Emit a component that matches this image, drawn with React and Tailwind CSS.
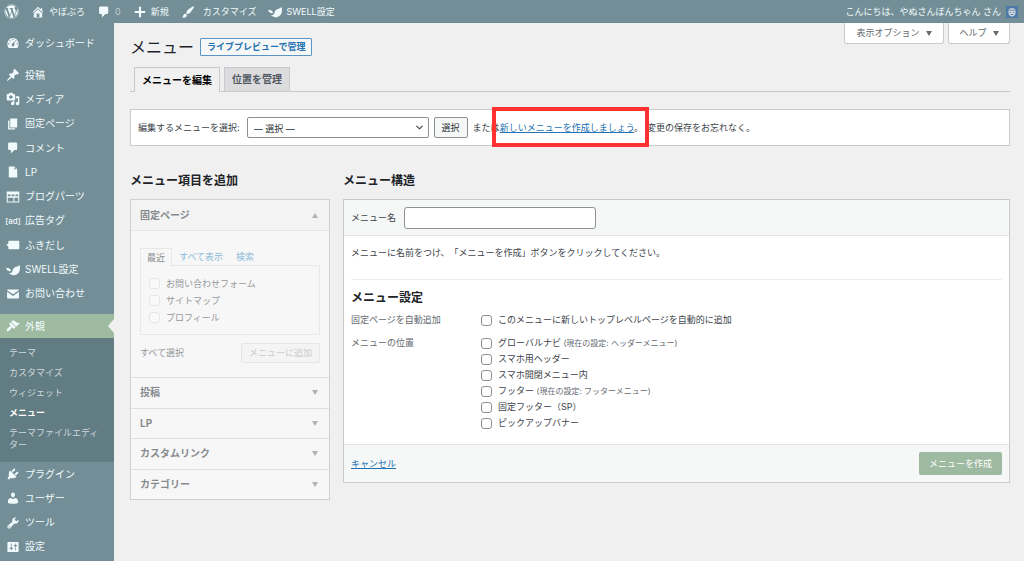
import { ChevronDown } from 'lucide-react';
import { FaWordpress } from 'react-icons/fa';

const paths = {
  home: 'M16 8.5l1.53 1.53-1.06 1.06L10 4.6l-6.47 6.49-1.06-1.06L10 2.5l4 4v-2h2v4zm-6-2.46l6 5.99V18H4v-5.97zM12 17v-5H8v5h4z',
  comment: 'M5 2h9c1.1 0 2 .9 2 2v7c0 1.1-.9 2-2 2h-2l-5 5v-5H5c-1.1 0-2-.9-2-2V4c0-1.1.9-2 2-2z',
  plus: 'M17.5 8.5v3h-6v6h-3v-6h-6v-3h6v-6h3v6h6z',
  brush: 'M18.33 3.57s.27-.8-.31-1.36c-.53-.52-1.22-.24-1.22-.24-.61.3-5.76 3.47-7.67 5.57-.86.96-2.06 3.79-1.09 4.82.92.98 3.96-.17 4.79-1 2.06-2.06 5.21-7.17 5.5-7.79zM1.4 17.65c2.37-1.56 1.46-3.41 3.23-4.64.93-.65 2.22-.62 3.08.29.63.67.8 2.57-.16 3.46-1.57 1.45-4 1.55-6.15.89z',
  swell: 'M19.5 3c1 4 .6 8.500-2 11.500-3.200 3.600-9.500 4-13.500.3 2.500 0 4.200-1 5-2.800.4-4 3.500-6.500 5.700-6.700 2-.2 3.800-1 4.800-2.300zM0 6.500c1.500 1.200 4 .6 5.500 1.600 1.200.8 1.700 2.200 1.200 3.700C3.500 12.300.5 10.200 0 6.500z',
  dashboard: 'M3.76 17h12.48c1.09-1.45 1.76-3.24 1.76-5.2C18 6.94 14.42 3 10 3S2 6.94 2 11.8c0 1.96.67 3.75 1.76 5.2zM10 4c.55 0 1 .45 1 1s-.45 1-1 1-1-.45-1-1 .45-1 1-1zM6 6c.55 0 1 .45 1 1s-.45 1-1 1-1-.45-1-1 .45-1 1-1zm8 0c.55 0 1 .45 1 1s-.45 1-1 1-1-.45-1-1 .45-1 1-1zm-5.37 5.55L12 7v6c0 1.1-.9 2-2 2s-2-.9-2-2c0-.57.24-1.08.63-1.45zM4 10c.55 0 1 .45 1 1s-.45 1-1 1-1-.45-1-1 .45-1 1-1zm12 0c.55 0 1 .45 1 1s-.45 1-1 1-1-.45-1-1 .45-1 1-1z',
  post: 'M10.44 3.02l1.82-1.82 6.36 6.35-1.83 1.82c-1.05-.68-2.48-.57-3.41.36l-.75.75c-.92.93-1.04 2.35-.35 3.41l-1.83 1.82-2.41-2.41-2.8 2.79c-.42.42-3.38 2.71-3.8 2.29s1.86-3.39 2.28-3.81l2.79-2.79L4.1 9.36l1.83-1.82c1.05.69 2.48.57 3.4-.36l.75-.75c.93-.92 1.05-2.35.36-3.41z',
  media: 'M13 11V4c0-.55-.45-1-1-1h-1.67L9 1H5L3.67 3H2c-.55 0-1 .45-1 1v7c0 .55.45 1 1 1h10c.55 0 1-.45 1-1zM7 4.5c1.38 0 2.5 1.12 2.5 2.5S8.38 9.5 7 9.5 4.5 8.38 4.5 7 5.62 4.5 7 4.5zM14 6h5v10.5c0 1.38-1.12 2.5-2.5 2.5S14 17.88 14 16.5s1.12-2.5 2.5-2.5c.17 0 .34.02.5.05V9h-3V6zm-4 8.05V13h2v3.5c0 1.38-1.12 2.5-2.5 2.5S7 17.88 7 16.5 8.12 14 9.5 14c.17 0 .34.02.5.05z',
  page: 'M6 15V2h10v13H6zm-1 1h8v2H3V5h2v11z',
  file: 'M12 2l4 4v12H4V2h8zm0 4h3l-3-3v3z',
  parts: 'M1 2h18v16H1V2zm1.500 4.500v2.500h4V6.500h-4zm5.500 0v2.500h4V6.500H8zm5.500 0v2.500h4V6.500h-4zM2.500 11v5.500h8V11h-8zM12 11v5.500h5.500V11H12z',
  balloon: 'M5 4h12.500c1 0 1.500.6 1.500 1.500v9c0 1-.5 1.500-1.500 1.500H5c-1 0-1.700-.6-1.700-1.500v-2.500L.5 9.500l2.800-1.500V5.500C3.300 4.600 4 4 5 4z',
  mail: 'M2.500 3.500h15c.6 0 1 .4 1 1l-8.500 6-8.500-6c0-.6.4-1 1-1zm-1 3.300l8.500 6 8.500-6v8.700c0 .6-.4 1-1 1h-15c-.6 0-1-.4-1-1V6.800z',
  appearance: 'M14.48 11.06L7.41 3.99l1.5-1.5c.5-.56 2.3-.47 3.51.32 1.21.8 1.43 1.28 2.91 2.1 1.18.64 2.45 1.26 4.45.85zm-.71.71L6.7 4.7 4.93 6.47c-.39.39-.39 1.02 0 1.41l1.06 1.06c.39.39.39 1.03 0 1.42-.6.6-1.43 1.11-2.21 1.69-.35.26-.7.53-1.01.84C1.43 14.23.4 16.08 1.4 17.07c.99 1 2.84-.03 4.18-1.36.31-.31.58-.66.85-1.02.57-.78 1.08-1.61 1.69-2.21.39-.39 1.02-.39 1.41 0l1.06 1.06c.39.39 1.02.39 1.41 0z',
  plugins: 'M13.11 4.36L9.87 7.6 8 5.73l3.24-3.24c.35-.34 1.05-.2 1.56.32.52.51.66 1.21.31 1.55zm-8 1.77l.91-1.12 9.01 9.01-1.19.84c-.71.71-2.63 1.16-3.82 1.16H6.14L4.9 17.26c-.59.59-1.54.59-2.12 0-.59-.58-.59-1.53 0-2.12l1.24-1.24v-3.88c0-1.13.4-3.19 1.09-3.89zm7.26 3.97l3.24-3.24c.34-.35 1.04-.21 1.55.31.52.51.66 1.21.31 1.55l-3.24 3.25z',
  users: 'M10 9.25c-2.27 0-2.73-3.44-2.73-3.44C7 4.02 7.82 2 9.97 2c2.16 0 2.98 2.02 2.71 3.81 0 0-.41 3.44-2.68 3.44zm0 2.57L12.72 10c2.39 0 4.52 2.33 4.52 4.53v2.49s-3.65 1.13-7.24 1.13c-3.65 0-7.24-1.13-7.24-1.13v-2.49c0-2.25 1.94-4.48 4.47-4.48z',
  tools: 'M16.68 9.77c-1.34 1.34-3.3 1.67-4.95.99l-5.41 6.52c-.99.99-2.59.99-3.58 0s-.99-2.59 0-3.57l6.52-5.42c-.68-1.65-.35-3.61.99-4.95 1.28-1.28 3.12-1.62 4.72-1.06l-2.89 2.89 2.82 2.82 2.86-2.87c.53 1.58.18 3.39-1.08 4.65zM3.81 16.21c.4.39 1.04.39 1.43 0 .4-.4.4-1.04 0-1.43-.39-.4-1.03-.4-1.43 0-.39.39-.39 1.03 0 1.43z',
  settings: 'M18 16V4c0-.55-.45-1-1-1H3c-.55 0-1 .45-1 1v12c0 .55.45 1 1 1h14c.55 0 1-.45 1-1zM8 11h1c.55 0 1 .45 1 1s-.45 1-1 1H8v1.5c0 .28-.22.5-.5.5s-.5-.22-.5-.5V13H6c-.55 0-1-.45-1-1s.45-1 1-1h1V5.5c0-.28.22-.5.5-.5s.5.22.5.5V11zm5-2h-1c-.55 0-1-.45-1-1s.45-1 1-1h1V5.5c0-.28.22-.5.5-.5s.5.22.5.5V7h1c.55 0 1 .45 1 1s-.45 1-1 1h-1v5.5c0 .28-.22.5-.5.5s-.5-.22-.5-.5V9z',
};

const mainItems = [
  { icon: 'post', label: '投稿' },
  { icon: 'media', label: 'メディア' },
  { icon: 'page', label: '固定ページ' },
  { icon: 'comment', label: 'コメント' },
  { icon: 'file', label: 'LP' },
  { icon: 'parts', label: 'ブログパーツ' },
  { icon: 'ad', label: '広告タグ' },
  { icon: 'balloon', label: 'ふきだし' },
  { icon: 'swell', label: 'SWELL設定' },
  { icon: 'mail', label: 'お問い合わせ' },
];

const bottomItems = [
  { icon: 'plugins', label: 'プラグイン' },
  { icon: 'users', label: 'ユーザー' },
  { icon: 'tools', label: 'ツール' },
  { icon: 'settings', label: '設定' },
];

const submenu = ['テーマ', 'カスタマイズ', 'ウィジェット', 'メニュー', 'テーマファイルエディター'];

const pages = ['お問い合わせフォーム', 'サイトマップ', 'プロフィール'];

const closedSections = ['投稿', 'LP', 'カスタムリンク', 'カテゴリー'];

const locations = [
  { label: 'グローバルナビ', note: '(現在の設定: ヘッダーメニュー)' },
  { label: 'スマホ用ヘッダー' },
  { label: 'スマホ開閉メニュー内' },
  { label: 'フッター', note: '(現在の設定: フッターメニュー)' },
  { label: '固定フッター（SP）' },
  { label: 'ピックアップバナー' },
];

function Icon({ name, className = 'size-[14px]' }) {
  return (
    <svg viewBox="0 0 20 20" fill="currentColor" fillRule="evenodd" className={`shrink-0 ${className}`} aria-hidden="true">
      <path d={paths[name]} />
    </svg>
  );
}

// 小さな三角マーク
function Caret({ up = false, className = '' }) {
  return (
    <svg viewBox="0 0 6 5" fill="currentColor" className={`h-[5px] w-[6px] shrink-0 ${className}`} aria-hidden="true">
      <path d={up ? 'M3 0l3 5H0z' : 'M0 0h6L3 5z'} />
    </svg>
  );
}

function BarItem({ icon, children, className = 'gap-1' }) {
  return (
    <a href="#" className={`flex items-center ${className}`}>
      <Icon name={icon} />
      <span>{children}</span>
    </a>
  );
}

function NavItem({ icon, label }) {
  return (
    <a href="#" className="flex items-center gap-[5px] pl-[6px] text-[10px] text-[#f1fafc]">
      {icon === 'ad' ? (
        <span className="flex w-[14px] justify-center text-[8px] font-medium whitespace-nowrap">[ad]</span>
      ) : (
        <Icon name={icon} />
      )}
      <span className="whitespace-nowrap">{label}</span>
    </a>
  );
}

function Sidebar() {
  return (
    <nav className="w-[114px] shrink-0 bg-[#738e96] pt-2">
      <div className="grid h-6">
        <NavItem icon="dashboard" label="ダッシュボード" />
      </div>
      <div className="mt-2 grid h-[243px] auto-rows-fr">
        {mainItems.map((item) => (
          <NavItem key={item.label} {...item} />
        ))}
      </div>

      {/* 外観（現在のメニュー） */}
      <div className="relative mt-2 grid h-6 bg-[#9ebaa0]">
        <NavItem icon="appearance" label="外観" />
        <svg viewBox="0 0 6 14" className="absolute top-[5px] right-0 h-[14px] w-[6px] fill-[#f0f0f1]" aria-hidden="true">
          <path d="M6 0v14L0 7z" />
        </svg>
      </div>
      <ul className="bg-[#627c83] pt-[5px] pr-2 pb-[7px] pl-[9px] text-[9px] leading-[12px] text-[#ced9dc]">
        {submenu.map((label) => (
          <li key={label} className="py-1">
            <a href="#" className={label === 'メニュー' ? 'font-bold text-white' : ''}>
              {label}
            </a>
          </li>
        ))}
      </ul>

      <div className="grid h-[97px] auto-rows-fr">
        {bottomItems.map((item) => (
          <NavItem key={item.label} {...item} />
        ))}
      </div>
    </nav>
  );
}

function CheckRow({ label, note }) {
  return (
    <label className="flex h-4 items-center gap-[6px] text-[#3c434a]">
      <input type="checkbox" className="size-[11px] shrink-0 appearance-none rounded-[3px] border border-[#8c8f94] bg-white" />
      <span>
        {label} {note && <span className="text-[8px] text-[#646970]">{note}</span>}
      </span>
    </label>
  );
}

function AddItems() {
  return (
    <section className="w-[200px] shrink-0">
      <h2 className="mb-[10px] text-[12px] leading-4 font-bold text-[#1d2327]">メニュー項目を追加</h2>
      <div className="border border-[#d0d1d3] bg-[#f7f7f7] text-[#96999c]">
        <button type="button" className="flex h-[31px] w-full items-center justify-between border-b border-[#e6e6e7] bg-[#f3f3f3] pr-[11px] pl-[9px] text-[10px] font-bold text-[#888b8e]">
          固定ページ
          <Caret up className="text-[#b0b2b4]" />
        </button>

        <div className="px-[9px] pt-[17px] pb-[14px]">
          <div className="flex h-[17px] items-center gap-px text-[#8dbbd9]">
            <a href="#" className="z-10 -mb-px flex h-[18px] items-center border border-b-0 border-[#e8e8e9] bg-[#f7f7f7] px-[6px] text-[#888b8e]">最近</a>
            <a href="#" className="px-[6px]">すべて表示</a>
            <a href="#" className="px-[6px]">検索</a>
          </div>
          <div className="border border-[#e8e8e9] px-[8px] pt-[9px] pb-[8px]">
            {pages.map((page) => (
              <label key={page} className="flex h-[17px] items-center gap-[6px]">
                <input type="checkbox" disabled className="size-[11px] appearance-none rounded-[3px] border border-[#e6e6e7] bg-[#f9f9f9]" />
                {page}
              </label>
            ))}
          </div>
          <div className="mt-2 flex h-5 items-center justify-between">
            <a href="#">すべて選択</a>
            <button type="button" disabled className="h-5 rounded-[2px] border border-[#e6e6e7] bg-[#f4f4f4] px-[7px] text-[#c9cbcd]">メニューに追加</button>
          </div>
        </div>

        <div className="grid h-[122px] auto-rows-fr">
          {closedSections.map((title) => (
            <button key={title} type="button" className="flex items-center justify-between border-t border-[#e0e0e1] pr-[11px] pl-[9px] text-[10px] font-bold text-[#888b8e]">
              {title}
              <Caret className="text-[#b0b2b4]" />
            </button>
          ))}
        </div>
      </div>
    </section>
  );
}

function MenuStructure() {
  return (
    <section className="min-w-0 flex-1">
      <h2 className="mb-[10px] text-[12px] leading-4 font-bold text-[#1d2327]">メニュー構造</h2>
      <form className="border border-[#c9cacd] bg-white">
        <div className="flex h-9 items-center gap-2 border-b border-[#e2e3e5] bg-[#f6f7f7] px-[7px]">
          <label htmlFor="menu-name">メニュー名</label>
          <input id="menu-name" type="text" className="h-[22px] w-[192px] rounded-[3px] border border-[#8c8f94] bg-white px-2" />
        </div>

        <div className="px-[7px] pt-[9px] pb-[13px]">
          <p className="leading-4">メニューに名前をつけ、「メニューを作成」ボタンをクリックしてください。</p>
          <hr className="mt-[18px] border-[#eeeeef]" />
          <h3 className="mt-[10px] text-[12px] leading-4 font-bold text-[#1d2327]">メニュー設定</h3>
          <fieldset className="mt-[6px] flex">
            <legend className="float-left w-[130px] leading-4 text-[#646970]">固定ページを自動追加</legend>
            <CheckRow label="このメニューに新しいトップレベルページを自動的に追加" />
          </fieldset>
          <fieldset className="mt-[7px] flex">
            <legend className="float-left w-[130px] leading-4 text-[#646970]">メニューの位置</legend>
            <div>
              {locations.map((item) => (
                <CheckRow key={item.label} {...item} />
              ))}
            </div>
          </fieldset>
        </div>

        <div className="flex h-[38px] items-center justify-between border-t border-[#e2e3e5] bg-[#f6f7f7] px-[7px]">
          <a href="#" className="text-[#2271b1] underline">キャンセル</a>
          <button type="submit" className="h-[23px] rounded-[2px] bg-[#9ebaa0] px-[10px] text-white">メニューを作成</button>
        </div>
      </form>
    </section>
  );
}

export default function App() {
  return (
    <div className="flex min-h-screen flex-col bg-[#f0f0f1] font-['Inter','Noto_Sans_CJK_JP',sans-serif] text-[9px] text-[#3c434a] [text-spacing-trim:space-all]">
      {/* 管理バー */}
      <header className="flex h-[23px] items-center justify-between bg-[#738e96] pr-[6px] pl-1 text-[#f1fafc]">
        <div className="flex items-center gap-3">
          <a href="#" aria-label="WordPress">
            <FaWordpress className="size-[15px]" />
          </a>
          <BarItem icon="home">やぼぶろ</BarItem>
          <BarItem icon="comment"><span className="text-[#c3d0d4]">0</span></BarItem>
          <BarItem icon="plus">新規</BarItem>
          <BarItem icon="brush" className="gap-2">カスタマイズ</BarItem>
          <BarItem icon="swell">SWELL設定</BarItem>
        </div>
        <a href="#" className="flex items-center gap-[5px]">
          こんにちは、やぬさんぼんちゃん さん
          <svg viewBox="0 0 12 12" className="size-3" aria-hidden="true">
            <rect width="12" height="12" fill="#4f7aa6" />
            <path d="M2.500 4C2.500 1.500 9.500 1.500 9.500 4v3c0 4.500-7 4.500-7 0z" fill="#c6d4e0" />
            <path d="M2.500 4.200h7M4 6.500h1M7 6.500h1M4.500 8.500h3" stroke="#4f6f92" strokeWidth="0.7" />
          </svg>
        </a>
      </header>

      <div className="flex flex-1">
        <Sidebar />

        <main className="min-w-0 flex-1 pr-[14px] pl-4">
          {/* タイトルと表示オプション */}
          <div className="flex items-start justify-between">
            <div className="flex items-center gap-[6px] pt-[15px]">
              <h1 className="text-[16px] leading-[18px] text-[#1d2327]">メニュー</h1>
              <a href="#" className="flex h-[18px] items-center rounded-[1px] border border-[#5b95c5] bg-[#f6f7f7] px-[6px] font-bold text-[#2271b1]">
                ライブプレビューで管理
              </a>
            </div>
            <div className="flex gap-1">
              <button type="button" className="flex h-[21px] w-[100px] items-center justify-center gap-[6px] rounded-b-[3px] border border-t-0 border-[#c9cacd] bg-white text-[#646970]">
                表示オプション <Caret />
              </button>
              <button type="button" className="flex h-[21px] w-[62px] items-center justify-center gap-[6px] rounded-b-[3px] border border-t-0 border-[#c9cacd] bg-white text-[#646970]">
                ヘルプ <Caret />
              </button>
            </div>
          </div>

          {/* タブ */}
          <div className="mt-[11px] flex h-[25px] gap-1 border-b border-[#c9cacd] pl-1 text-[10px] font-bold">
            <a href="#" className="-mb-px flex items-center border border-b-0 border-[#c9cacd] bg-[#f0f0f1] px-[7px] text-black">メニューを編集</a>
            <a href="#" className="flex items-center border border-b-0 border-[#c9cacd] bg-[#dcdcde] px-[7px] text-[#50575e]">位置を管理</a>
          </div>

          {/* メニュー選択 */}
          <form className="mt-[17px] flex items-center border border-[#c9cacd] bg-white p-[7px] leading-[21px]">
            <label htmlFor="select-menu">編集するメニューを選択:</label>
            <div className="relative ml-[7px]">
              <select id="select-menu" className="block h-[21px] w-[182px] appearance-none rounded-[2px] border border-[#8c8f94] bg-white px-[6px] text-[#2c3338]">
                <option>— 選択 —</option>
              </select>
              <ChevronDown className="pointer-events-none absolute top-[5px] right-[4px] size-[11px] text-[#50575e]" strokeWidth={3} />
            </div>
            <button type="button" className="ml-[5px] h-[21px] rounded-[2px] border border-[#8c8f94] bg-[#f6f7f7] px-[7px] leading-[19px] text-[#2c3338]">選択</button>
            <p className="ml-[5px] flex">
              または
              <span className="relative">
                <a href="#" className="text-[#2271b1] underline">新しいメニューを作成しましょう</a>。
                <span className="pointer-events-none absolute -top-[10px] -right-[6px] -bottom-[9px] -left-[8px] border-4 border-[#ff3131]" />
              </span>
              <span className="ml-1">変更の保存をお忘れなく。</span>
            </p>
          </form>

          <div className="mt-[27px] flex items-start gap-[13px] pb-8">
            <AddItems />
            <MenuStructure />
          </div>
        </main>
      </div>
    </div>
  );
}
